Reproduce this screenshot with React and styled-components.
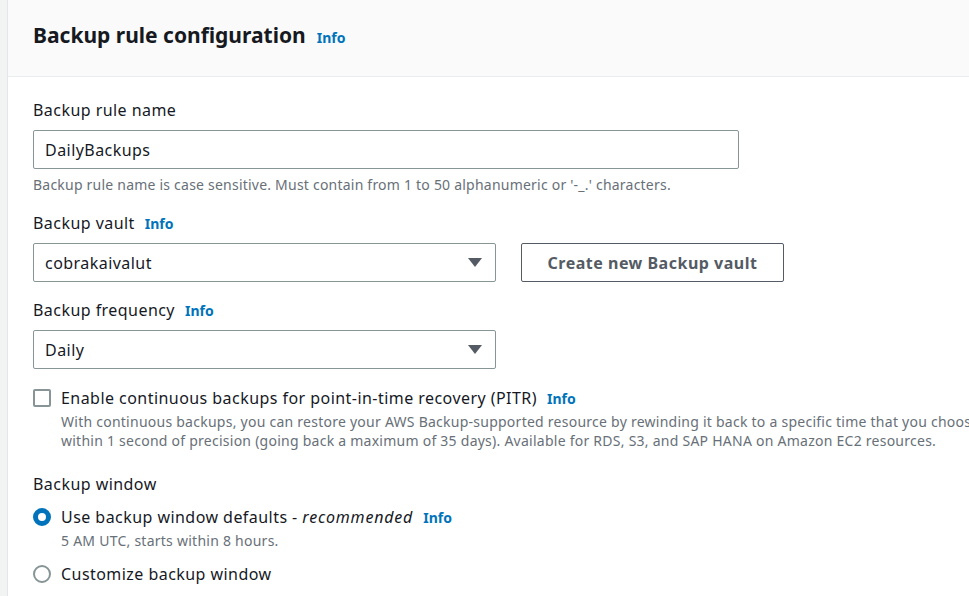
import React from "react";
import styled, { createGlobalStyle } from "styled-components";

const GlobalStyle = createGlobalStyle`
  html, body { margin: 0; padding: 0; background: #ffffff; }
  body { font-family: "Noto Sans", "Open Sans", Arial, sans-serif; color: #16191f; overflow: hidden; }
  * { box-sizing: border-box; }
`;

const Page = styled.div`
  display: flex;
  width: 969px;
  height: 596px;
  overflow: hidden;
`;

const SideStrip = styled.div`
  width: 8px;
  flex: none;
  background: #f2f3f3;
  border-right: 1px solid #e4e7e7;
`;

const Panel = styled.div`
  flex: 1;
  min-width: 0;
  display: flex;
  flex-direction: column;
`;

const Header = styled.div`
  height: 77px;
  flex: none;
  background: #fafafa;
  border-bottom: 1px solid #eaeded;
  display: flex;
  align-items: baseline;
  padding: 21px 0 0 25px;
`;

const Title = styled.h2`
  margin: 0;
  font-size: 21px;
  line-height: 28px;
  font-weight: 700;
  color: #16191f;
`;

const InfoLink = styled.a`
  font-size: 14px;
  font-weight: 700;
  letter-spacing: 0;
  color: #0073bb;
  text-decoration: none;
  margin-left: ${(p) => p.$gap || 10}px;
  line-height: 20px;
`;

const Body = styled.div`
  padding: 22px 25px 0 25px;
  display: flex;
  flex-direction: column;
`;

const Field = styled.div`
  display: flex;
  flex-direction: column;
  margin-top: ${(p) => p.$mt || 0}px;
`;

const Label = styled.div`
  display: flex;
  align-items: baseline;
  font-size: 16px;
  letter-spacing: 0.45px;
  line-height: 22px;
  color: #16191f;
`;

const Row = styled.div`
  display: flex;
  align-items: center;
  margin-top: 9px;
`;

const TextInput = styled.div`
  margin-top: 9px;
  width: 706px;
  height: 39px;
  border: 1px solid #879596;
  border-radius: 2px;
  padding: 0 11px;
  display: flex;
  align-items: center;
  font-size: 16px;
  letter-spacing: 0.45px;
  color: #16191f;
`;

const Hint = styled.div`
  margin-top: 6px;
  font-size: 14px;
  letter-spacing: 0.22px;
  line-height: 20px;
  color: #687078;
`;

const Select = styled.div`
  width: 463px;
  height: 39px;
  border: 1px solid #879596;
  border-radius: 2px;
  padding: 0 13px 0 11px;
  display: flex;
  align-items: center;
  justify-content: space-between;
  font-size: 16px;
  letter-spacing: 0.45px;
  color: #16191f;
`;

const Button = styled.button`
  margin-left: 25px;
  width: 263px;
  height: 39px;
  background: #ffffff;
  border: 1px solid #545b64;
  border-radius: 2px;
  font-family: inherit;
  font-size: 16px;
  font-weight: 700;
  letter-spacing: 0.5px;
  color: #545b64;
  padding: 0;
`;

const Caret = () => (
  <svg width="14" height="10" viewBox="0 0 14 10">
    <path d="M0 0 H14 L7 9 Z" fill="#545b64" />
  </svg>
);

const OptionRow = styled.div`
  display: flex;
  align-items: flex-start;
  margin-top: ${(p) => p.$mt || 0}px;
`;

const Checkbox = styled.span`
  width: 18px;
  height: 18px;
  flex: none;
  border: 2px solid #879596;
  border-radius: 2px;
  margin-top: 2px;
`;

const Radio = styled.span`
  width: 18px;
  height: 18px;
  flex: none;
  border-radius: 50%;
  margin-top: 2px;
  border: ${(p) => (p.$checked ? "5px solid #0073bb" : "2px solid #879596")};
  background: #ffffff;
`;

const OptionText = styled.div`
  margin-left: 10px;
  display: flex;
  flex-direction: column;
  min-width: 0;
`;

const OptionLabel = styled.div`
  display: flex;
  align-items: baseline;
  font-size: 16px;
  letter-spacing: 0.45px;
  line-height: 22px;
  color: #16191f;
  white-space: nowrap;
`;

const Emphasis = styled.i`
  letter-spacing: 0.8px;
`;

const OptionDesc = styled.div`
  margin-top: ${(p) => p.$mt || 2}px;
  font-size: 14px;
  letter-spacing: 0.25px;
  line-height: 19px;
  color: #687078;
  white-space: nowrap;
`;

export default function App() {
  return (
    <>
      <GlobalStyle />
      <Page>
        <SideStrip />
        <Panel>
          <Header>
            <Title>Backup rule configuration</Title>
            <InfoLink $gap={11}>Info</InfoLink>
          </Header>
          <Body>
            <Field>
              <Label>Backup rule name</Label>
              <TextInput>DailyBackups</TextInput>
              <Hint>
                Backup rule name is case sensitive. Must contain from 1 to 50 alphanumeric or '-_.' characters.
              </Hint>
            </Field>

            <Field $mt={17}>
              <Label>
                Backup vault<InfoLink>Info</InfoLink>
              </Label>
              <Row>
                <Select>
                  cobrakaivalut
                  <Caret />
                </Select>
                <Button>Create new Backup vault</Button>
              </Row>
            </Field>

            <Field $mt={17}>
              <Label>
                Backup frequency<InfoLink>Info</InfoLink>
              </Label>
              <Row>
                <Select>
                  Daily
                  <Caret />
                </Select>
              </Row>
            </Field>

            <OptionRow $mt={18}>
              <Checkbox />
              <OptionText>
                <OptionLabel>
                  Enable continuous backups for point-in-time recovery (PITR)
                  <InfoLink>Info</InfoLink>
                </OptionLabel>
                <OptionDesc $mt={3}>
                  With continuous backups, you can restore your AWS Backup-supported resource by rewinding it back to a specific time that you choose
                  <br />
                  within 1 second of precision (going back a maximum of 35 days). Available for RDS, S3, and SAP HANA on Amazon EC2 resources.
                </OptionDesc>
              </OptionText>
            </OptionRow>

            <Field $mt={23}>
              <Label>Backup window</Label>
            </Field>

            <OptionRow $mt={11}>
              <Radio $checked />
              <OptionText>
                <OptionLabel>
                  Use backup window defaults -&nbsp;<Emphasis>recommended</Emphasis>
                  <InfoLink>Info</InfoLink>
                </OptionLabel>
                <OptionDesc $mt={3}>5 AM UTC, starts within 8 hours.</OptionDesc>
              </OptionText>
            </OptionRow>

            <OptionRow $mt={13}>
              <Radio />
              <OptionText>
                <OptionLabel>Customize backup window</OptionLabel>
              </OptionText>
            </OptionRow>
          </Body>
        </Panel>
      </Page>
    </>
  );
}
